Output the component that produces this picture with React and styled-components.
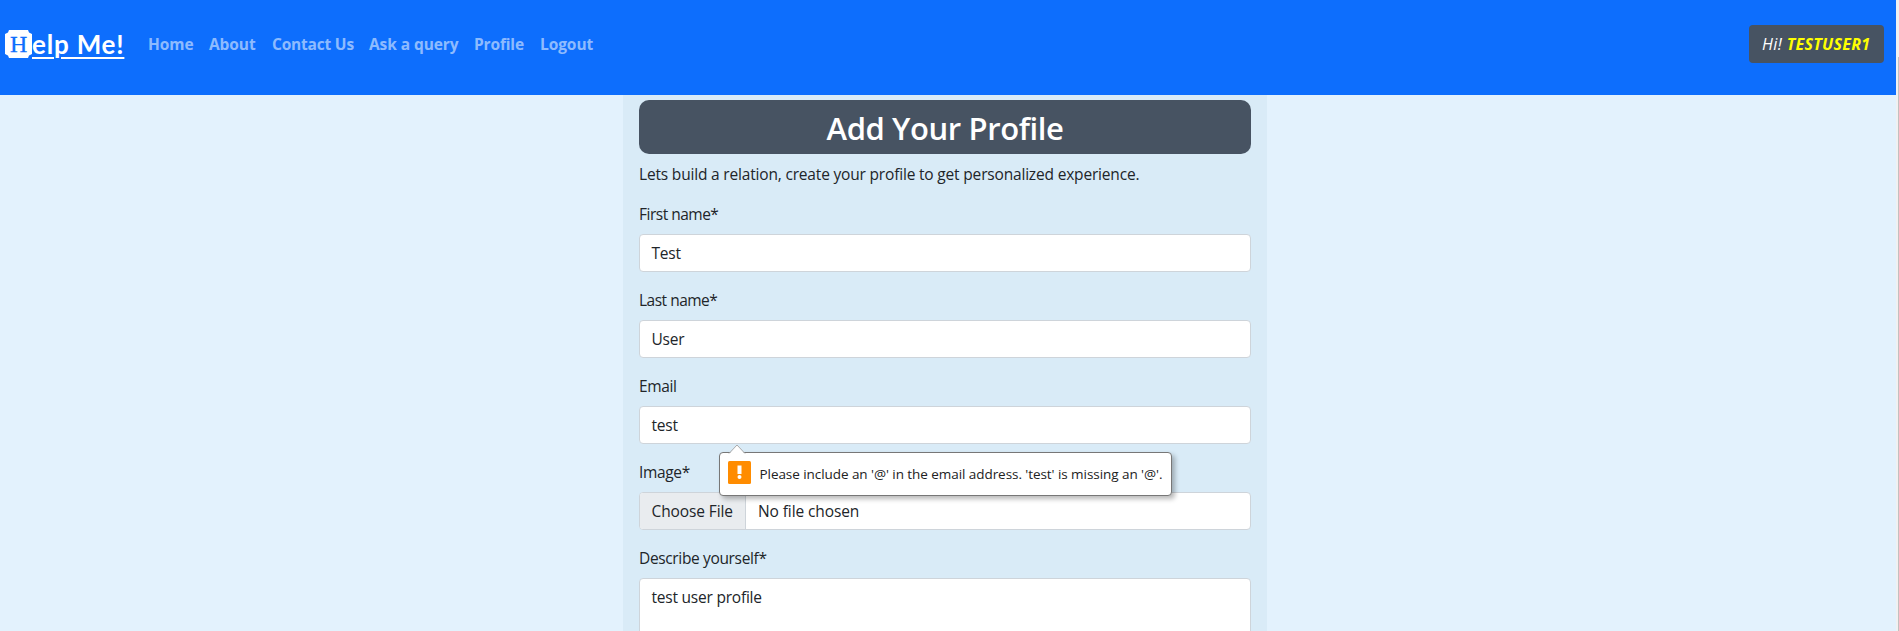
import React from "react";
import styled, { createGlobalStyle } from "styled-components";

const GlobalStyle = createGlobalStyle`
  * { box-sizing: border-box; }
  body {
    margin: 0;
    overflow: hidden;
    background: #e3f2fd;
    color: #212529;
    font: 400 15.5px/24px "Open Sans", "Noto Sans", sans-serif;
    letter-spacing: -0.18px;
  }
`;

const Screen = styled.div`
  display: flex;
  height: 631px;
  overflow: hidden;
`;

const Page = styled.div`
  flex: 1;
  min-width: 0;
`;

const ScrollTrack = styled.div`
  width: 3px;
  padding: 57px 0 0 2px;
  background: #f1f1f1;
`;

const ScrollThumb = styled.div`
  height: 100%;
  background: #c1c1c1;
`;

const Navbar = styled.nav`
  display: flex;
  align-items: flex-start;
  height: 95px;
  padding: 25px 12px 0 5px;
  background: #0d6efd;
`;

const Brand = styled.a`
  display: flex;
  width: 143px;
  padding-top: 5px;
  color: #fff;
`;

const BrandTile = styled.svg`
  display: block;
  width: 27px;
  height: 28px;
`;

const BrandText = styled.span`
  font: 700 26px/28px Lato, sans-serif;
  letter-spacing: 0.8px;
  text-decoration: underline;
  text-decoration-thickness: 2px;
  text-underline-offset: 3px;
`;

const NavLinks = styled.div`
  display: flex;
  gap: 16px;
  flex: 1;
  padding-top: 7px;
`;

const NavLink = styled.a`
  width: ${(p) => p.$width}px;
  white-space: nowrap;
  color: rgba(255, 255, 255, 0.55);
  font-weight: 700;
  letter-spacing: ${(p) => p.$tracking || -0.08}px;
`;

const Greeting = styled.div`
  width: 135px;
  height: 38px;
  padding: 7px 13px;
  border-radius: 4px;
  background: #475362;
  color: #fff;
  font-size: 16px;
  font-style: italic;
  letter-spacing: 0.4px;
  white-space: nowrap;

  b { color: #ff0; letter-spacing: 0.3px; }
`;

const Panel = styled.main`
  width: 644px;
  height: 536px;
  margin-left: 623px;
  padding: 5px 16px 0;
  background: #d9ebf7;
`;

const Title = styled.h1`
  height: 54px;
  margin: 0 0 8px;
  border-radius: 10px;
  background: #475362;
  color: #fff;
  text-align: center;
  font-size: 31px;
  font-weight: 600;
  line-height: 56px;
  letter-spacing: -0.4px;
`;

const Intro = styled.p`
  margin: 0 0 16px;
`;

const Field = styled.div`
  position: relative;
  display: flex;
  flex-direction: column;
  gap: 8px;
  margin-bottom: 16px;
`;

const Label = styled.label`
  letter-spacing: ${(p) => p.$tracking || -0.35}px;
`;

const Control = styled.div`
  display: flex;
  height: ${(p) => p.$height || 38}px;
  padding: 6px 11.5px;
  border: 1px solid #ced4da;
  border-radius: 4px;
  background: #fff;
  letter-spacing: -0.22px;
`;

const FileControl = styled(Control)`
  padding: 0;
  overflow: hidden;
`;

const FileButton = styled.span`
  width: 106px;
  padding: 6px 11.5px;
  border-right: 1px solid #ced4da;
  background: #e9ecef;
  white-space: nowrap;
  letter-spacing: -0.1px;
`;

const FileName = styled.span`
  padding: 6px 12px;
  letter-spacing: -0.1px;
`;

const Bubble = styled.div`
  position: absolute;
  z-index: 1;
  top: 78px;
  left: 80px;
  display: flex;
  gap: 8.5px;
  width: 453px;
  height: 44px;
  padding: 8px;
  border: 1px solid #777;
  border-radius: 4px;
  background: #fff;
  box-shadow: 3px 3px 5px rgba(0, 0, 0, 0.28);
  color: #222;
  font-size: 13.5px;
  line-height: 26px;
  letter-spacing: -0.06px;
  white-space: nowrap;
`;

const BubbleArrow = styled.svg`
  position: absolute;
  top: -9px;
  left: 8px;
  width: 18px;
  height: 10px;
`;

const WarningIcon = styled.svg`
  flex: none;
  width: 23px;
  height: 23px;
`;

const links = [
  { text: "Home", width: 45 },
  { text: "About", width: 47 },
  { text: "Contact Us", width: 81, tracking: -0.2 },
  { text: "Ask a query", width: 89 },
  { text: "Profile", width: 50, tracking: -0.15 },
  { text: "Logout", width: 54 },
];

export default function App() {
  return (
    <Screen>
      <GlobalStyle />
      <Page>
        <Navbar>
          <Brand>
            <BrandTile viewBox="0 0 27 28">
              <path d="M4 0H23L24 2.5L27 4V24L24 25.5L23 28H4L3 25.5L0 24V4L3 2.5Z" fill="#fff" />
              <text x="13.7" y="21.7" textAnchor="middle" fill="#0d6efd" stroke="#0d6efd" strokeWidth="0.3" fontFamily="Liberation Serif, serif" fontSize="24" letterSpacing="0">H</text>
            </BrandTile>
            <BrandText>elp Me!</BrandText>
          </Brand>
          <NavLinks>
            {links.map((l) => (
              <NavLink key={l.text} $width={l.width} $tracking={l.tracking}>{l.text}</NavLink>
            ))}
          </NavLinks>
          <Greeting>Hi! <b>TESTUSER1</b></Greeting>
        </Navbar>
        <Panel>
          <Title>Add Your Profile</Title>
          <Intro>Lets build a relation, create your profile to get personalized experience.</Intro>
          <Field>
            <Label $tracking={-0.5}>First name*</Label>
            <Control>Test</Control>
          </Field>
          <Field>
            <Label $tracking={-0.5}>Last name*</Label>
            <Control>User</Control>
          </Field>
          <Field>
            <Label>Email</Label>
            <Control>test</Control>
            <Bubble>
              <BubbleArrow viewBox="0 0 18 10">
                <path d="M1 10L9 1L17 10Z" fill="#fff" />
                <path d="M1 9.5L9 1L17 9.5" fill="none" stroke="#aaa" />
              </BubbleArrow>
              <WarningIcon viewBox="0 0 23 23">
                <rect width="23" height="23" rx="1.5" fill="#ff8c00" />
                <rect x="9.5" y="4.5" width="4" height="8.5" fill="#fff" />
                <circle cx="11.5" cy="16" r="2" fill="#fff" />
              </WarningIcon>
              <span>Please include an '@' in the email address. 'test' is missing an '@'.</span>
            </Bubble>
          </Field>
          <Field>
            <Label>Image*</Label>
            <FileControl>
              <FileButton>Choose File</FileButton>
              <FileName>No file chosen</FileName>
            </FileControl>
          </Field>
          <Field>
            <Label>Describe yourself*</Label>
            <Control $height={240}>test user profile</Control>
          </Field>
        </Panel>
      </Page>
      <ScrollTrack><ScrollThumb /></ScrollTrack>
    </Screen>
  );
}
